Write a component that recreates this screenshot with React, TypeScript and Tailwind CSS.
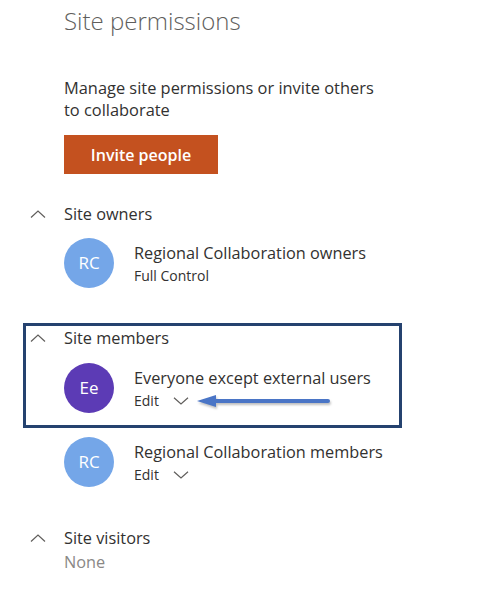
import React from "react"

type Person = {
  initials: string
  name: string
  role: string
  color: string
  dropdown?: boolean
}

function ChevronUp() {
  return (
    <svg width="16" height="8" viewBox="0 0 16 8" className="shrink-0">
      <polyline points="1,7.5 8,1 15,7.5" fill="none" stroke="#605e5c" strokeWidth="1.2" />
    </svg>
  )
}

function ChevronDown() {
  return (
    <svg width="16" height="8" viewBox="0 0 16 8" className="ml-[14px]">
      <polyline points="1,0.7 8,7 15,0.7" fill="none" stroke="#605e5c" strokeWidth="1.2" />
    </svg>
  )
}

function SectionHeader({ title, className = "" }: { title: string; className?: string }) {
  return (
    <div className={"flex items-center h-6 " + className}>
      <ChevronUp />
      <span className="ml-[18px] text-[16.3px] text-[#323130]">{title}</span>
    </div>
  )
}

function PersonRow({ p, className = "" }: { p: Person; className?: string }) {
  return (
    <div className={"flex items-start " + className}>
      <div
        className={
          "w-[50px] h-[50px] rounded-full flex items-center justify-center text-white text-[17px] shrink-0 " +
          p.color
        }
      >
        {p.initials}
      </div>
      <div className="ml-[20px] pt-[4px]">
        <div className="text-[16.3px] leading-[22px] text-[#323130]">{p.name}</div>
        <div className="flex items-center text-[14px] leading-[24px] text-[#323130]">
          {p.role}
          {p.dropdown && <ChevronDown />}
        </div>
      </div>
    </div>
  )
}

export default function App() {
  return (
    <div className="relative w-[481px] h-[594px] overflow-hidden bg-white font-['Open_Sans',sans-serif]">
      <h1 className="pl-16 pt-[3px] text-[24px] leading-[36px] font-light text-[#605e5c]">
        Site permissions
      </h1>

      <p className="pl-16 mt-[38px] text-[16.4px] leading-[22px] text-[#323130]">
        Manage site permissions or invite others
        <br />
        to collaborate
      </p>

      <button className="ml-16 mt-[14px] w-[154px] h-[39px] bg-[#c4511f] text-white text-[16px] font-semibold">
        Invite people
      </button>

      {/* Site owners */}
      <SectionHeader title="Site owners" className="mt-[28px] pl-[30px]" />
      <PersonRow
        className="mt-3 pl-16"
        p={{ initials: "RC", name: "Regional Collaboration owners", role: "Full Control", color: "bg-[#74a6e8]" }}
      />

      {/* Site members, highlighted */}
      <div className="mt-[35px] ml-[23px] w-[379px] border-[3px] border-[#25426f] pb-3">
        <SectionHeader title="Site members" className="pl-[4px]" />
        <PersonRow
          className="mt-[13px] pl-[38px]"
          p={{ initials: "Ee", name: "Everyone except external users", role: "Edit", color: "bg-[#5c3bb5]", dropdown: true }}
        />
      </div>
      <PersonRow
        className="mt-[9px] pl-16"
        p={{ initials: "RC", name: "Regional Collaboration members", role: "Edit", color: "bg-[#74a6e8]", dropdown: true }}
      />

      {/* Site visitors */}
      <SectionHeader title="Site visitors" className="mt-[39px] pl-[30px]" />
      <div className="pl-16 text-[16.3px] leading-6 text-[#8a8886]">None</div>

      {/* callout arrow */}
      <svg
        width="150"
        height="24"
        viewBox="0 0 150 24"
        className="absolute left-[192px] top-[389px] drop-shadow-[1px_2px_1px_rgba(0,0,0,0.25)]"
      >
        <line x1="20" y1="12" x2="136" y2="12" stroke="#4a75c6" strokeWidth="4" strokeLinecap="round" />
        <polygon points="5,12 24,6 24,18" fill="#4a75c6" />
      </svg>
    </div>
  )
}
